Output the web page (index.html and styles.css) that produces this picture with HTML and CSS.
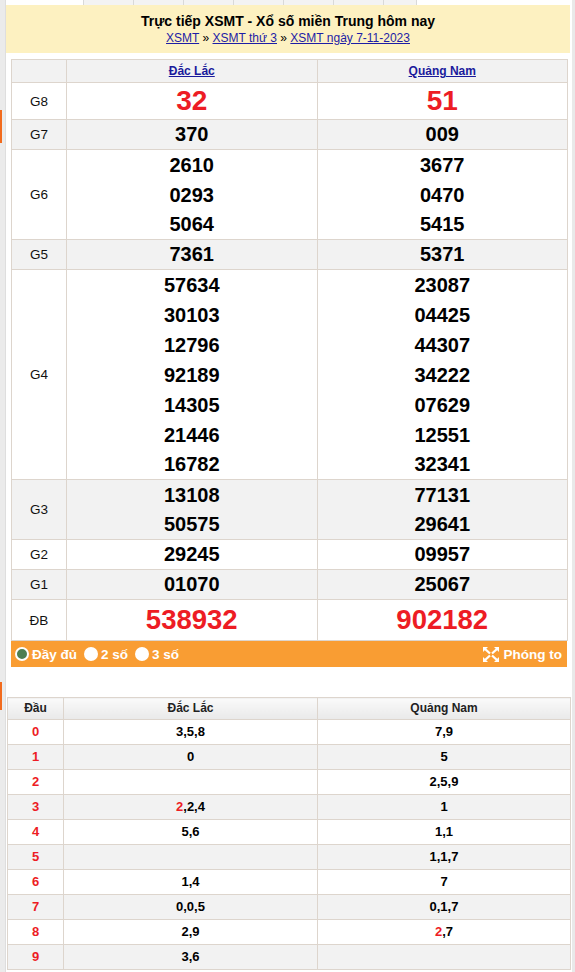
FILE: index.html
```html
<!DOCTYPE html>
<html lang="vi">
<head>
<meta charset="utf-8">
<title>XSMT</title>
<link rel="stylesheet" href="styles.css">
</head>
<body>
<div class="page">
  <div class="side-l"><span class="mark m1"></span><span class="mark m2"></span></div>
  <div class="main">
    <div class="tabs"><span class="sp"></span><span class="tab"></span><span class="tab"></span><span class="tab"></span><span class="tab"></span><span class="tab"></span><span class="tab"></span><span class="tab last"></span></div>
    <div class="head">
      <h2 class="title">Trực tiếp XSMT - Xổ số miền Trung hôm nay</h2>
      <div class="crumbs"><a href="#">XSMT</a> » <a href="#">XSMT thứ 3</a> » <a href="#">XSMT ngày 7-11-2023</a></div>
    </div>
    <table class="kq">
      <colgroup><col class="c-lbl"><col><col></colgroup>
      <tr class="hd"><th></th><th><a href="#">Đắc Lắc</a></th><th><a href="#">Quảng Nam</a></th></tr>
      <tr><td class="lbl">G8</td><td class="n big8"><div>32</div></td><td class="n big8"><div>51</div></td></tr>
      <tr class="alt"><td class="lbl">G7</td><td class="n"><div>370</div></td><td class="n"><div>009</div></td></tr>
      <tr><td class="lbl">G6</td><td class="n"><div>2610</div><div>0293</div><div>5064</div></td><td class="n"><div>3677</div><div>0470</div><div>5415</div></td></tr>
      <tr class="alt"><td class="lbl">G5</td><td class="n"><div>7361</div></td><td class="n"><div>5371</div></td></tr>
      <tr><td class="lbl">G4</td><td class="n"><div>57634</div><div>30103</div><div>12796</div><div>92189</div><div>14305</div><div>21446</div><div>16782</div></td><td class="n"><div>23087</div><div>04425</div><div>44307</div><div>34222</div><div>07629</div><div>12551</div><div>32341</div></td></tr>
      <tr class="alt"><td class="lbl">G3</td><td class="n"><div>13108</div><div>50575</div></td><td class="n"><div>77131</div><div>29641</div></td></tr>
      <tr><td class="lbl">G2</td><td class="n"><div>29245</div></td><td class="n"><div>09957</div></td></tr>
      <tr class="alt"><td class="lbl">G1</td><td class="n"><div>01070</div></td><td class="n"><div>25067</div></td></tr>
      <tr><td class="lbl">ĐB</td><td class="n bigdb"><div>538932</div></td><td class="n bigdb"><div>902182</div></td></tr>
    </table>
    <div class="bar">
      <label class="opt"><span class="dot on"></span>Đầy đủ</label>
      <label class="opt"><span class="dot"></span>2 số</label>
      <label class="opt"><span class="dot"></span>3 số</label>
      <span class="zoom">
        <svg width="16" height="15" viewBox="0 0 16 15" aria-hidden="true">
          <g fill="#fff">
            <polygon points="0,0 5,0 0,5"/>
            <polygon points="16,0 11,0 16,5"/>
            <polygon points="0,15 5,15 0,10"/>
            <polygon points="16,15 11,15 16,10"/>
          </g>
          <g stroke="#fff" stroke-width="2.3" stroke-linecap="butt">
            <line x1="1.5" y1="1.5" x2="7" y2="6.5"/>
            <line x1="14.5" y1="1.5" x2="9" y2="6.5"/>
            <line x1="1.5" y1="13.5" x2="7" y2="8.5"/>
            <line x1="14.5" y1="13.5" x2="9" y2="8.5"/>
          </g>
        </svg>
        Phóng to
      </span>
    </div>
    <table class="loto">
      <colgroup><col class="c-dau"><col class="c-mid"><col></colgroup>
      <tr><th>Đầu</th><th>Đắc Lắc</th><th>Quảng Nam</th></tr>
      <tr><td class="d">0</td><td>3,5,8</td><td>7,9</td></tr>
      <tr class="alt"><td class="d">1</td><td>0</td><td>5</td></tr>
      <tr><td class="d">2</td><td></td><td>2,5,9</td></tr>
      <tr class="alt"><td class="d">3</td><td><span class="r">2</span>,2,4</td><td>1</td></tr>
      <tr><td class="d">4</td><td>5,6</td><td>1,1</td></tr>
      <tr class="alt"><td class="d">5</td><td></td><td>1,1,7</td></tr>
      <tr><td class="d">6</td><td>1,4</td><td>7</td></tr>
      <tr class="alt"><td class="d">7</td><td>0,0,5</td><td>0,1,7</td></tr>
      <tr><td class="d">8</td><td>2,9</td><td><span class="r">2</span>,7</td></tr>
      <tr class="alt"><td class="d">9</td><td>3,6</td><td></td></tr>
    </table>
  </div>
  <div class="side-r"></div>
</div>
</body>
</html>
```
FILE: styles.css
```css
html, body {
  margin: 0;
  padding: 0;
}
body {
  background: #e9e9e9;
  font-family: "Liberation Sans", Arial, sans-serif;
  color: #000;
}
.page {
  display: flex;
  align-items: flex-start;
}
.side-l {
  width: 6px;
  flex: none;
  display: flex;
  flex-direction: column;
  align-self: stretch;
  background: #ebebeb;
  box-shadow: inset -1px 0 0 #dedede;
}
.mark {
  display: block;
  width: 2px;
  background: #f26b1d;
}
.m1 { margin-top: 110px; height: 33px; }
.m2 { margin-top: 539px; height: 28px; }
.main {
  width: 566px;
  flex: none;
  background: #fff;
  padding-bottom: 2px;
}
.side-r {
  width: 3px;
  flex: none;
}
.tabs {
  display: flex;
  height: 5px;
}
.tabs .sp { width: 77px; }
.tabs .tab {
  width: 49px;
  background: #f3f3f3;
  border-left: 1px solid #d9d9d9;
}
.tabs .tab.last {
  width: 32px;
  border-right: 1px solid #d9d9d9;
}
.head {
  width: 564px;
  height: 48px;
  box-sizing: border-box;
  padding-top: 8px;
  background: #fdf1c1;
  text-align: center;
}
.title {
  margin: 0;
  font-size: 14px;
  line-height: 17px;
  font-weight: bold;
}
.crumbs {
  font-size: 12px;
  line-height: 16px;
}
.crumbs a {
  color: #1d1da6;
  text-decoration: underline;
}
.kq {
  border-collapse: collapse;
  width: 557px;
  margin: 6px 0 0 5px;
  table-layout: fixed;
}
.kq .c-lbl { width: 55px; }
.kq th, .kq td {
  border: 1px solid #ddd5cd;
  padding: 0;
  text-align: center;
}
.kq th {
  background: #f2f2f2;
  font-size: 12px;
  line-height: 22px;
  font-weight: bold;
}
.kq th a {
  color: #1a1a9c;
  text-decoration: underline;
}
.kq tr.alt td { background: #f2f2f2; }
.lbl {
  font-size: 13.5px;
  color: #111;
  vertical-align: middle;
}
.n div {
  font-size: 20px;
  font-weight: bold;
  line-height: 30px;
}
.n div:last-child { line-height: 29px; }
.n.big8 div {
  font-size: 28px;
  line-height: 36px;
  color: #ed1c24;
}
.n.bigdb div {
  font-size: 27.5px;
  line-height: 40px;
  color: #ed1c24;
}
.bar {
  width: 556px;
  height: 26px;
  margin-left: 5px;
  box-sizing: border-box;
  padding: 0 5px 0 4px;
  background: #f99d33;
  display: flex;
  align-items: center;
  color: #fff;
  font-weight: bold;
  font-size: 13.5px;
}
.opt {
  display: flex;
  align-items: center;
  margin-right: 7px;
}
.dot {
  width: 14px;
  height: 14px;
  border-radius: 50%;
  background: #fff;
  margin-right: 3px;
  box-sizing: border-box;
}
.dot.on {
  border: 2px solid #fff;
  background: #4f7f52;
}
.zoom {
  margin-left: auto;
  display: flex;
  align-items: center;
  gap: 5px;
}
.loto {
  border-collapse: collapse;
  width: 564px;
  margin: 30px 0 0 1px;
  table-layout: fixed;
}
.loto .c-dau { width: 56px; }
.loto .c-mid { width: 254px; }
.loto th, .loto td {
  border: 1px solid #ddd5cd;
  padding: 0;
  text-align: center;
}
.loto th {
  background: linear-gradient(#fafafa, #e9e9e9);
  font-size: 12px;
  line-height: 21px;
  font-weight: bold;
  color: #222;
}
.loto td {
  font-size: 13px;
  line-height: 24px;
  font-weight: bold;
}
.loto tr.alt td { background: #f2f2f2; }
.loto td.d, .loto .r { color: #ed1c24; }
```
